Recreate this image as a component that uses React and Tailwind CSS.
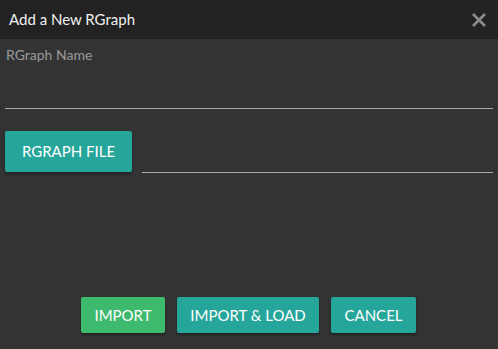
export default function App() {
  return (
    <div className="w-[498px] h-[349px] flex flex-col bg-[#333333]" style={{ fontFamily: "Lato, 'Open Sans', sans-serif" }}>
      <div className="h-[39px] shrink-0 bg-[#222222] flex items-center justify-between pl-[9px] pr-[10px]">
        <span className="text-[15px] text-[#f0f0f0]">Add a New RGraph</span>
        <svg width="16" height="16" viewBox="0 0 16 16" className="mr-[1px]">
          <path d="M2 2 L14 14 M14 2 L2 14" stroke="#8a8a8a" strokeWidth="2.8" strokeLinecap="butt" />
        </svg>
      </div>

      <div className="flex-1 flex flex-col px-[5px]">
        <label className="text-[14px] text-[#9a9a9a] pl-[1px] mt-[8px] leading-[16px]">RGraph Name</label>
        <div className="h-[46px] border-b border-[#aaaaaa]" />

        <div className="flex items-end mt-[22px]">
          <button className="w-[127px] h-[41px] rounded-[2px] bg-[#26a69a] text-white text-[15px] shadow-[0_2px_3px_rgba(0,0,0,0.35)]">
            RGRAPH FILE
          </button>
          <div className="flex-1 ml-[10px] border-b border-[#aaaaaa] mb-[-1px]" />
        </div>

        <div className="flex-1" />

        <div className="flex justify-center gap-[12px] mb-[16px] pr-[1px]">
          <button className="w-[84px] h-[36px] rounded-[2px] bg-[#3dba6d] text-white text-[15px] shadow-[0_2px_3px_rgba(0,0,0,0.35)]">
            IMPORT
          </button>
          <button className="w-[142px] h-[36px] rounded-[2px] bg-[#26a69a] text-white text-[15px] shadow-[0_2px_3px_rgba(0,0,0,0.35)]">
            IMPORT &amp; LOAD
          </button>
          <button className="w-[85px] h-[36px] rounded-[2px] bg-[#26a69a] text-white text-[15px] shadow-[0_2px_3px_rgba(0,0,0,0.35)]">
            CANCEL
          </button>
        </div>
      </div>
    </div>
  );
}
